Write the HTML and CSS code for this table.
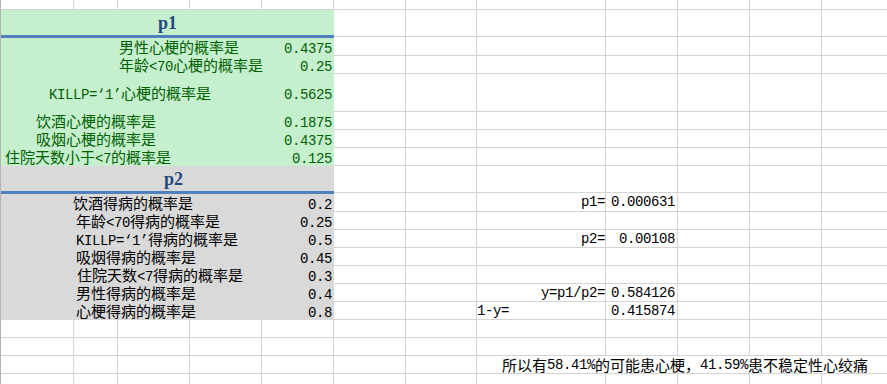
FILE: index.html
```html
<!DOCTYPE html>
<html lang="zh-CN">
<head>
<meta charset="utf-8">
<title>概率计算</title>
<link rel="stylesheet" href="styles.css">
</head>
<body>
<div class="sheet">
  <!-- r0 -->
  <div class="c"></div><div class="c"></div><div class="c"></div><div class="c"></div><div class="c"></div><div class="c"></div><div class="c"></div><div class="c"></div><div class="c"></div><div class="c"></div><div class="c"></div><div class="c"></div>
  <!-- r1 -->
  <div class="fill good head">p1</div>
  <div class="c"></div><div class="c"></div><div class="c"></div><div class="c"></div><div class="c"></div><div class="c"></div><div class="c"></div>
  <!-- r2 -->
  <div class="fill good first"><span class="lbl i118">男性心梗的概率是</span><span class="val"><span class="lat">0.4375</span></span></div>
  <div class="c"></div><div class="c"></div><div class="c"></div><div class="c"></div><div class="c"></div><div class="c"></div><div class="c"></div>
  <!-- r3 -->
  <div class="fill good"><span class="lbl i118">年龄<span class="lat">&lt;70</span>心梗的概率是</span><span class="val"><span class="lat">0.25</span></span></div>
  <div class="c"></div><div class="c"></div><div class="c"></div><div class="c"></div><div class="c"></div><div class="c"></div><div class="c"></div>
  <!-- r4 -->
  <div class="fill good"><span class="lbl i48"><span class="lat">KILLP=‘1’</span>心梗的概率是</span><span class="val"><span class="lat">0.5625</span></span></div>
  <div class="c"></div><div class="c"></div><div class="c"></div><div class="c"></div><div class="c"></div><div class="c"></div><div class="c"></div>
  <!-- r5 -->
  <div class="fill good"><span class="lbl i35">饮酒心梗的概率是</span><span class="val"><span class="lat">0.1875</span></span></div>
  <div class="c"></div><div class="c"></div><div class="c"></div><div class="c"></div><div class="c"></div><div class="c"></div><div class="c"></div>
  <!-- r6 -->
  <div class="fill good"><span class="lbl i35">吸烟心梗的概率是</span><span class="val"><span class="lat">0.4375</span></span></div>
  <div class="c"></div><div class="c"></div><div class="c"></div><div class="c"></div><div class="c"></div><div class="c"></div><div class="c"></div>
  <!-- r7 -->
  <div class="fill good"><span class="lbl i4">住院天数小于<span class="lat">&lt;7</span>的概率是</span><span class="val"><span class="lat">0.125</span></span></div>
  <div class="c"></div><div class="c"></div><div class="c"></div><div class="c"></div><div class="c"></div><div class="c"></div><div class="c"></div>
  <!-- r8 -->
  <div class="fill neutral head h2">p2</div>
  <div class="c"></div><div class="c"></div><div class="c"></div><div class="c"></div><div class="c"></div><div class="c"></div><div class="c"></div>
  <!-- r9 -->
  <div class="fill neutral first"><span class="lbl i72">饮酒得病的概率是</span><span class="val"><span class="lat">0.2</span></span></div>
  <div class="c"></div><div class="c"></div>
  <div class="c r"><span class="lat">p1=</span></div>
  <div class="c num"><span class="lat">0.000631</span></div>
  <div class="c"></div><div class="c"></div><div class="c"></div>
  <!-- r10 -->
  <div class="fill neutral"><span class="lbl i75">年龄<span class="lat">&lt;70</span>得病的概率是</span><span class="val"><span class="lat">0.25</span></span></div>
  <div class="c"></div><div class="c"></div><div class="c"></div><div class="c"></div><div class="c"></div><div class="c"></div><div class="c"></div>
  <!-- r11 -->
  <div class="fill neutral"><span class="lbl i75"><span class="lat">KILLP=‘1’</span>得病的概率是</span><span class="val"><span class="lat">0.5</span></span></div>
  <div class="c"></div><div class="c"></div>
  <div class="c r"><span class="lat">p2=</span></div>
  <div class="c num"><span class="lat">0.00108</span></div>
  <div class="c"></div><div class="c"></div><div class="c"></div>
  <!-- r12 -->
  <div class="fill neutral"><span class="lbl i75">吸烟得病的概率是</span><span class="val"><span class="lat">0.45</span></span></div>
  <div class="c"></div><div class="c"></div><div class="c"></div><div class="c"></div><div class="c"></div><div class="c"></div><div class="c"></div>
  <!-- r13 -->
  <div class="fill neutral"><span class="lbl i76">住院天数<span class="lat">&lt;7</span>得病的概率是</span><span class="val"><span class="lat">0.3</span></span></div>
  <div class="c"></div><div class="c"></div><div class="c"></div><div class="c"></div><div class="c"></div><div class="c"></div><div class="c"></div>
  <!-- r14 -->
  <div class="fill neutral"><span class="lbl i75">男性得病的概率是</span><span class="val"><span class="lat">0.4</span></span></div>
  <div class="c"></div><div class="c"></div>
  <div class="c r"><span class="lat">y=p1/p2=</span></div>
  <div class="c num"><span class="lat">0.584126</span></div>
  <div class="c"></div><div class="c"></div><div class="c"></div>
  <!-- r15 -->
  <div class="fill neutral"><span class="lbl i75">心梗得病的概率是</span><span class="val"><span class="lat">0.8</span></span></div>
  <div class="c"></div><div class="c"></div>
  <div class="c"><span class="lat">1-y=</span></div>
  <div class="c num"><span class="lat">0.415874</span></div>
  <div class="c"></div><div class="c"></div><div class="c"></div>
  <!-- r16 -->
  <div class="c"></div><div class="c"></div><div class="c"></div><div class="c"></div><div class="c"></div><div class="c"></div><div class="c"></div><div class="c"></div><div class="c"></div><div class="c"></div><div class="c"></div><div class="c"></div>
  <!-- r17 -->
  <div class="c"></div><div class="c"></div><div class="c"></div><div class="c"></div><div class="c"></div><div class="c"></div><div class="c"></div><div class="c"></div><div class="c"></div><div class="c"></div><div class="c"></div><div class="c"></div>
  <!-- r18 -->
  <div class="c"></div><div class="c"></div><div class="c"></div><div class="c"></div><div class="c"></div><div class="c"></div><div class="c"></div>
  <div class="note">所以有<span class="lat">58.41%</span>的可能患心梗，<span class="lat">41.59%</span>患不稳定性心绞痛</div>
  <!-- r19 -->
  <div class="c"></div><div class="c"></div><div class="c"></div><div class="c"></div><div class="c"></div><div class="c"></div><div class="c"></div><div class="c"></div><div class="c"></div><div class="c"></div><div class="c"></div><div class="c"></div>
</div>
</body>
</html>
```

FILE: styles.css
```css
* { box-sizing: border-box; }
html, body { margin: 0; padding: 0; background: #ffffff; }
body { width: 887px; height: 384px; overflow: hidden; }

.sheet {
  display: grid;
  grid-template-columns: 73px 44px 72px 72px 72px 72px 71px 129px 72px 72px 72px 72px;
  grid-template-rows: 10px 27px 19px 18px 38px 18px 18px 18px 27px 19px 18px 18px 18px 18px 18px 18px 18px 18px 18px 18px;
  width: 894px;
  border-left: 1px solid #b4b4b4;
  font-family: "Noto Sans CJK SC", sans-serif;
  font-size: 15px;
  line-height: 18px;
  color: #000000;
}

.c {
  display: flex;
  align-items: center;
  white-space: nowrap;
  border-right: 1px solid #d4d4d4;
  border-bottom: 1px solid #d4d4d4;
}
.c.r { justify-content: flex-end; }
.c.num { justify-content: flex-end; padding-right: 2px; }

.fill {
  grid-column: span 5;
  display: flex;
  align-items: center;
  white-space: nowrap;
}
.good { background: #c6efce; color: #006100; }
.neutral { background: #d9d9d9; color: #000000; }
.first { border-top: 1px solid #4f81bd; }

.head {
  justify-content: center;
  padding-top: 2px;
  border-bottom: 2px solid #4f81bd;
  font-family: "Liberation Serif", serif;
  font-weight: bold;
  font-size: 18px;
  line-height: 23px;
  color: #1f497d;
}
.head.h2 { padding-left: 12px; }

.lbl { flex: 1; }
.val { padding-right: 2px; }

.i4 { padding-left: 4px; }
.i35 { padding-left: 35px; }
.i48 { padding-left: 48px; }
.i72 { padding-left: 72px; }
.i75 { padding-left: 75px; }
.i76 { padding-left: 76px; }
.i118 { padding-left: 118px; }

.lat {
  font-family: "Liberation Mono", monospace;
  font-size: 14px;
  letter-spacing: -0.4px;
  line-height: 0;
}

.note {
  grid-column: span 5;
  display: flex;
  align-items: center;
  white-space: nowrap;
  padding-left: 25px;
  border-bottom: 1px solid #d4d4d4;
}
```
